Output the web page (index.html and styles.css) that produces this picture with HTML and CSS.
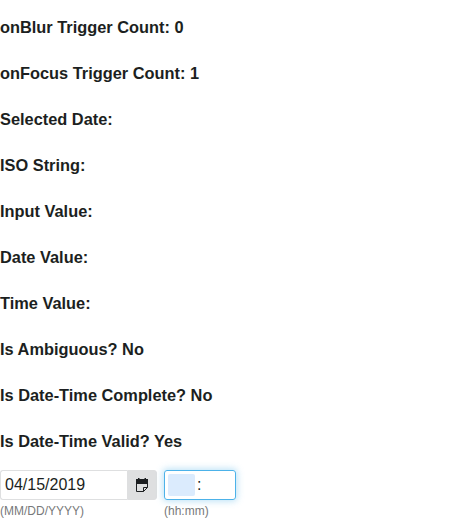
FILE: index.html
```html
<!DOCTYPE html>
<html lang="en">
<head>
<meta charset="utf-8">
<title>Date Time Input</title>
<link rel="stylesheet" href="styles.css">
</head>
<body>
<main>
<h3>onBlur Trigger Count: 0</h3>
<h3>onFocus Trigger Count: 1</h3>
<h3>Selected Date:</h3>
<h3>ISO String:</h3>
<h3>Input Value:</h3>
<h3>Date Value:</h3>
<h3>Time Value:</h3>
<h3>Is Ambiguous? No</h3>
<h3>Is Date-Time Complete? No</h3>
<h3>Is Date-Time Valid? Yes</h3>
<div class="fields">
  <div class="field">
    <div class="date-row">
      <div class="date-input">04/15/2019</div>
      <button class="calendar" type="button" aria-label="Calendar">
        <svg width="14" height="14" viewBox="0 0 14 14"><path fill="#1c1f21" d="M1 1h2V0h1.5v1h5V0H11v1h2v5H1z"/><path fill="none" stroke="#1c1f21" d="M1.5 5v8.5h7l4-4V5M8.5 13.5v-4h4"/></svg>
      </button>
    </div>
    <div class="hint">(MM/DD/YYYY)</div>
  </div>
  <div class="field">
    <div class="time-input"><span class="segment"></span><span class="colon">:</span></div>
    <div class="hint">(hh:mm)</div>
  </div>
</div>
</main>
</body>
</html>
```

FILE: styles.css
```css
* { box-sizing: border-box; }
body { margin: 0; background: #fff; color: #1c1f21; font: 16px/24px "Liberation Sans", Arial, sans-serif; }
main { padding-top: 15px; }
h3 { margin: 0 0 22px; font-size: 16.38px; font-weight: 700; line-height: 24px; }
h3:last-of-type { margin-bottom: 17px; }
.fields { display: flex; gap: 7px; }
.date-row { display: flex; width: 157px; height: 30px; }
.date-input { width: 127px; border: 1px solid #dedfe0; border-right: 0; border-radius: 3px 0 0 3px; padding: 2px 4px; }
.calendar { display: flex; align-items: center; justify-content: center; width: 30px; padding: 0; border: 1px solid #dedfe0; border-radius: 0 3px 3px 0; background: #dedfe0; }
.time-input { display: flex; align-items: center; width: 72px; height: 30px; padding: 0 3px; border: 1px solid #4cb2e9; border-radius: 3px; box-shadow: 0 0 7px 1px rgba(76, 178, 233, .4); }
.segment { width: 27px; height: 22px; border-radius: 2px; background: #dbebfd; }
.colon { margin-left: 2px; }
.hint { margin-top: 4px; font-size: 12px; line-height: 14px; color: #77797a; }
```
